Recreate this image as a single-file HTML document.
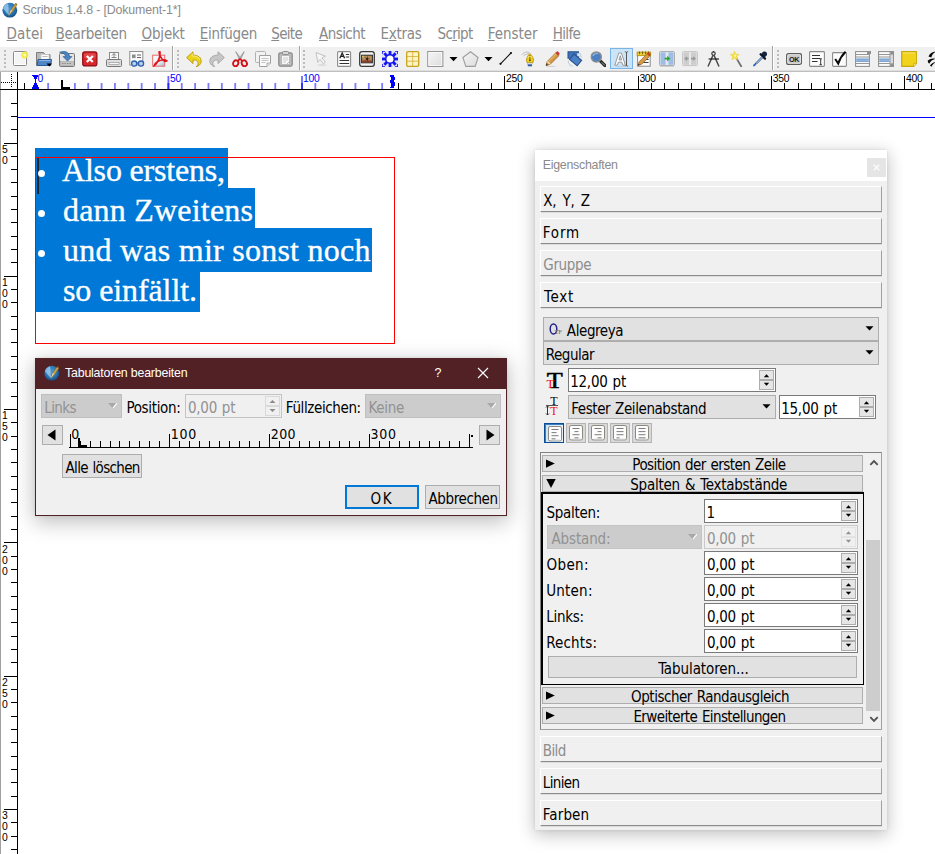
<!DOCTYPE html>
<html lang="de"><head><meta charset="utf-8"><title>Scribus 1.4.8 - [Dokument-1*]</title>
<style>
*{box-sizing:border-box;margin:0;padding:0}
html,body{width:935px;height:854px;overflow:hidden;background:#fff}
body{position:relative;font-family:"DejaVu Sans Condensed","DejaVu Sans","Liberation Sans",sans-serif;font-size:15px;letter-spacing:-0.45px;color:#000;font-stretch:condensed}
.abs,.abs *{position:absolute}
.a{position:absolute}
.t{position:absolute;white-space:nowrap;line-height:1}
.seg{font-family:"Liberation Sans",sans-serif;letter-spacing:0}
/* title + menu */
#title{left:22.5px;top:4.3px;font-size:12.4px;letter-spacing:-0.15px !important;color:#8b8b8b}
.m{position:absolute;top:27px;font-size:15px;color:#898989;white-space:nowrap;line-height:1;letter-spacing:-0.2px}
.m u{text-decoration:underline;text-underline-offset:0.5px;text-decoration-thickness:1px}
#tb{left:0;top:46.5px;width:935px;height:25.5px;background:linear-gradient(#f0f0f0 0,#f0f0f0 22.5px,#d6d6d6 24px,#8e8e8e 25.5px)}
.vsep{position:absolute;top:46px;width:2px;height:24px;border-left:1px solid #a5a5a5;border-right:1px solid #fff}
.grip{position:absolute;top:50px;width:2px;height:18px;background:repeating-linear-gradient(#bcbcbc 0,#bcbcbc 2px,transparent 2px,transparent 4px)}
.rl{font-size:10.4px;letter-spacing:-0.3px;font-family:"Liberation Sans",sans-serif}
.doc{font-family:"Liberation Serif",serif;font-size:32px;color:#fff;letter-spacing:0;line-height:1;-webkit-text-stroke:0.35px #fff}
.ic{position:absolute;top:51px;width:16px;height:16px;overflow:visible}
</style></head><body>
<!-- TITLE -->
<svg class="a" style="left:2px;top:2px" width="17" height="17" viewBox="0 0 17 17"><defs><radialGradient id="sg2" cx="45%" cy="40%" r="62%"><stop offset="0" stop-color="#4a9ad8"/><stop offset=".6" stop-color="#2a78b8"/><stop offset="1" stop-color="#134a80"/></radialGradient></defs><circle cx="7.800" cy="8.200" r="7.400" fill="url(#sg2)"/><path d="M6.200 1.200C3.500 1.700 1.500 3.600 .9 6.200L7 13.400z" fill="#cfe6f7" opacity=".55"/><path d="M6.800 13.600L8.800 8L13 1.900L14.800 3.100L11 9z" fill="#c9a248" stroke="#8a6a1e" stroke-width=".5"/><path d="M6.800 13.600L8.800 8L10 8.800z" fill="#f0dfae"/><path d="M13 1.900l1.800 1.200l.5-.9l-1.500-1.200z" fill="#7a5416"/></svg>
<div class="t seg" id="title">Scribus 1.4.8 - [Dokument-1*]</div>
<!-- MENU -->
<div class="m" style="left:6.53px;letter-spacing:0.137px"><u>D</u>atei</div>
<div class="m" style="left:55.53px;letter-spacing:-0.295px"><u>B</u>earbeiten</div>
<div class="m" style="left:141.60px;letter-spacing:-0.219px"><u>O</u>bjekt</div>
<div class="m" style="left:199.83px;letter-spacing:-0.303px"><u>E</u>infügen</div>
<div class="m" style="left:271.30px;letter-spacing:-0.687px"><u>S</u>eite</div>
<div class="m" style="left:319.00px;letter-spacing:-0.565px"><u>A</u>nsicht</div>
<div class="m" style="left:380.53px;letter-spacing:-0.283px">E<u>x</u>tras</div>
<div class="m" style="left:437.60px;letter-spacing:-0.701px">Sc<u>r</u>ipt</div>
<div class="m" style="left:487.83px;letter-spacing:-0.064px"><u>F</u>enster</div>
<div class="m" style="left:552.83px;letter-spacing:-0.691px"><u>H</u>ilfe</div>
<!-- TOOLBAR -->
<div class="a" id="tb"></div>
<div class="vsep" style="left:172px"></div>
<div class="vsep" style="left:299px"></div>
<div class="vsep" style="left:772px"></div>
<div class="grip" style="left:4px"></div>
<div class="grip" style="left:177px"></div>
<div class="grip" style="left:303px"></div>
<div class="grip" style="left:777px"></div>
<div class="a" style="left:610px;top:48px;width:23px;height:21px;background:#cce4f7;border:1px solid #7ab3e6"></div>
<svg class="a" style="left:13px;top:51px" width="16" height="16" viewBox="0 0 16 16"><rect x=".5" y=".5" width="13" height="14" rx="1" fill="#f4f4f4" stroke="#8a8a8a"/><rect x="1.5" y="1.5" width="11" height="12" fill="none" stroke="#fff"/><circle cx="11.8" cy="4" r="3.6" fill="#f3ea3c" opacity=".9"/><circle cx="11.8" cy="4" r="1.6" fill="#fffbb0"/></svg>
<svg class="a" style="left:36px;top:51px" width="16" height="16" viewBox="0 0 16 16"><path d="M.5 1.5h7l1.5 2h5v11h-13.5z" fill="#b9b9b9" stroke="#7d7d7d"/><rect x="5" y="3.5" width="8" height="6" fill="#fafafa" stroke="#c9c9c9" stroke-width=".6"/><path d="M6.5 5.5h5" stroke="#bbb"/><path d="M2 8.5h13.5l-.8 6h-13.5z" fill="#4f86c6" stroke="#2b5c9a"/><path d="M3 9.5h11.5" stroke="#8fb5e2"/><path d="M10.5 12.5h5.5l-2.75 3z" fill="#000"/></svg>
<svg class="a" style="left:59px;top:51px" width="16" height="16" viewBox="0 0 16 16"><rect x=".5" y="2.500" width="15" height="13" rx="1" fill="#e4e4e4" stroke="#777"/><rect x="1.500" y="10.500" width="13" height="4" fill="#c4c4c4" stroke="#999" stroke-width=".5"/><path d="M3 12.500h10" stroke="#8a8a8a" stroke-dasharray="1.5 1"/><path d="M.6 1.300c4.800-1.900 9.600-.6 9.900 4.300h2.400l-4.400 4.500l-4.400-4.500h2.500c-.1-2.300-2.400-3.800-6-4.300z" fill="#4c84bf" stroke="#2a5f96" stroke-width=".7"/></svg>
<svg class="a" style="left:82px;top:51px" width="16" height="16" viewBox="0 0 16 16"><rect x=".7" y=".9" width="14.2" height="14" rx="2.2" fill="#d8262c" stroke="#8e0f13" stroke-width="1.2"/><rect x="2" y="2.2" width="11.6" height="5" rx="1.5" fill="#e85b5f" opacity=".6"/><path d="M4.8 5l6 6M10.8 5l-6 6" stroke="#fff" stroke-width="2.3"/></svg>
<svg class="a" style="left:106px;top:51px" width="16" height="16" viewBox="0 0 16 16"><rect x="3.5" y="1.5" width="9" height="7" fill="#fbfbfb" stroke="#8a8a8a"/><path d="M8 2.5v4M6 4.5l2-2l2 2M5.5 6.5h5" stroke="#777" stroke-width=".9" fill="none"/><rect x=".5" y="8.5" width="15" height="7" rx="1" fill="#dedede" stroke="#777"/><rect x="3" y="11.5" width="10" height="2" fill="#f7f7f7" stroke="#8a8a8a" stroke-width=".6"/></svg>
<svg class="a" style="left:129px;top:51px" width="16" height="16" viewBox="0 0 16 16"><rect x=".8" y=".5" width="13" height="13.5" fill="#fbfbfb" stroke="#8e8e8e"/><rect x="3" y="3.5" width="3.6" height="3.6" fill="#8d8d8d"/><path d="M8 4h4M8 6.5h4" stroke="#666" stroke-width="1"/><circle cx="5.2" cy="12.6" r="2.6" fill="#b9d0ee" stroke="#2f61ae" stroke-width="1.3"/><circle cx="12" cy="12.6" r="2.6" fill="#b9d0ee" stroke="#2f61ae" stroke-width="1.3"/><path d="M7.6 12h2" stroke="#2f61ae" stroke-width="1.3"/></svg>
<svg class="a" style="left:152px;top:51px" width="16" height="16" viewBox="0 0 16 16"><defs><linearGradient id="pdfg" x1="0" y1="0" x2="1" y2="1"><stop offset="0" stop-color="#fff"/><stop offset=".6" stop-color="#e8eef2"/><stop offset="1" stop-color="#8fb7c9"/></linearGradient></defs><rect x=".7" y="4.2" width="12" height="11" fill="url(#pdfg)" stroke="#ea6a6e" stroke-width="1"/><path d="M7.6 0c-1.3 1.6 .6 5.4 2.6 8.2c1.5 2 3.6 2.3 4.6 1.6c-1.4-1.2-4.2-1.2-7-.2c-2.6 1-5 3-5.6 5.2c2-0.8 5-6.300 5.6-9.800c.3-2 .5-4-.2-5z" fill="none" stroke="#e0151b" stroke-width="1.600"/></svg>
<svg class="a" style="left:186px;top:51px" width="16" height="16" viewBox="0 0 16 16"><path d="M7 .8v3.400c5.200-.3 8.400 2.600 8.200 6.400c-.2 2.600-2.400 4.600-5.200 5.200c2.200-1.600 2.800-3.600 1.600-5.200c-1-1.300-2.600-1.700-4.600-1.600v3.600l-6.400-6z" fill="#edd21c" stroke="#b7990c" stroke-width=".9" stroke-linejoin="round"/><path d="M6.300 2.600v2.400c4.200-.2 6.600 1.400 7.600 3.600" fill="none" stroke="#f8ec86" stroke-width=".9"/></svg>
<svg class="a" style="left:209px;top:51px" width="16" height="16" viewBox="0 0 16 16"><path d="M9 .8v3.400c-5.200-.3-8.400 2.600-8.200 6.400c.2 2.600 2.400 4.600 5.200 5.200c-2.200-1.600-2.800-3.600-1.600-5.200c1-1.300 2.600-1.700 4.600-1.600v3.600l6.400-6z" fill="#c6c6c6" stroke="#a3a3a3" stroke-width=".9" stroke-linejoin="round"/></svg>
<svg class="a" style="left:232px;top:51px" width="16" height="16" viewBox="0 0 16 16"><path d="M3.800 .6l3.800 8.400l1.300-1.400zM12.200 .6l-3.800 8.400l-1.300-1.400z" fill="#c9c9c9" stroke="#8a8a8a" stroke-width=".7"/><ellipse cx="3.700" cy="12.300" rx="2.500" ry="3" transform="rotate(28 3.7 12.3)" fill="none" stroke="#d01318" stroke-width="1.900"/><ellipse cx="12.300" cy="12.300" rx="2.500" ry="3" transform="rotate(-28 12.3 12.3)" fill="none" stroke="#d01318" stroke-width="1.900"/><path d="M5.200 10.200l2.800-2.200l2.800 2.200" stroke="#d01318" stroke-width="1.600" fill="none"/></svg>
<svg class="a" style="left:255px;top:51px" width="16" height="16" viewBox="0 0 16 16"><rect x=".5" y=".5" width="10" height="11" rx="1" fill="#f2f2f2" stroke="#b1b1b1"/><path d="M4.500 4.500h11v7.500l-3.500 3.500h-7.500z" fill="#fafafa" stroke="#9f9f9f"/><path d="M12 15.500v-3.500h3.500" fill="#e4e4e4" stroke="#9f9f9f" stroke-width=".8"/><path d="M6.500 7.500h7M6.500 9.500h7M6.500 11.500h4" stroke="#bdbdbd" stroke-width=".9"/></svg>
<svg class="a" style="left:278px;top:51px" width="16" height="16" viewBox="0 0 16 16"><rect x=".8" y="1.800" width="13.400" height="13.400" rx="1.600" fill="#bdbdbd" stroke="#868686" stroke-width="1.200"/><rect x="4.500" y=".5" width="6" height="3" rx="1" fill="#d6d6d6" stroke="#868686" stroke-width=".9"/><path d="M3.500 4.500h8v9h-5l-3-0z" fill="#f7f7f7" stroke="#a9a9a9" stroke-width=".7"/><path d="M5 7h5M5 9h5M5 11h3" stroke="#c6c6c6" stroke-width=".9"/><path d="M11.500 10.500l-3 3" stroke="#aaa" stroke-width=".8"/></svg>
<svg class="a" style="left:315px;top:51px" width="16" height="16" viewBox="0 0 16 16"><path d="M1 1.500l9.500 3.700l-3.600 1.700l3.600 4.300l-2.100 1.600l-3.400-4.400l-2.200 2.900z" fill="#f6f6f6" stroke="#c2c2c2" stroke-width="1"/><ellipse cx="7" cy="14" rx="4.500" ry="1" fill="#ddd"/></svg>
<svg class="a" style="left:337px;top:51px" width="16" height="16" viewBox="0 0 16 16"><rect x=".6" y=".6" width="13" height="14.800" rx="1" fill="#fdfdfd" stroke="#8d8d8d" stroke-width="1.100"/><path d="M2.800 7.200l2.400-5.200l2.400 5.200M3.700 5.400h3" stroke="#222" stroke-width="1.300" fill="none"/><path d="M8.800 3.500h3.400M8.800 6h3.400M2.500 9.500h9.700M2.500 12.500h9.700" stroke="#333" stroke-width="1.100"/></svg>
<svg class="a" style="left:359px;top:51px" width="16" height="16" viewBox="0 0 16 16"><rect x=".7" y=".7" width="14.600" height="14.600" rx="2.400" fill="#f5f5f5" stroke="#3a3a3a" stroke-width="1.300"/><rect x="2.600" y="4.200" width="10.800" height="7.600" fill="#b68a5a" stroke="#2a2a2a" stroke-width="1"/><rect x="3.200" y="9.400" width="9.600" height="1.800" fill="#8e3b2b"/><path d="M8.600 5l.3 2.400l2 .4l-2 .6l.2 2.200l-1.100-1.800l-1.900 .8l1.300-1.600l-1.300-1.400l1.900 .4z" fill="#2a1a10"/><rect x="3.200" y="4.800" width="1.500" height="1.500" fill="#d8d36a"/></svg>
<svg class="a" style="left:382px;top:51px" width="16" height="16" viewBox="0 0 16 16"><rect x="0" y="0" width="16" height="16" fill="#dfe4fb"/><path d="M0 0h3M0 0v3M16 0h-3M16 0v3M0 16h3M0 16v-3M16 16h-3M16 16v-3" stroke="#1414f0" stroke-width="1.600"/><rect x="6.600" y="0" width="2.800" height="4" y="0.300" transform="rotate(0 8 8)" fill="#1414f0"/><rect x="6.600" y="0" width="2.800" height="4" y="0.300" transform="rotate(45 8 8)" fill="#1414f0"/><rect x="6.600" y="0" width="2.800" height="4" y="0.300" transform="rotate(90 8 8)" fill="#1414f0"/><rect x="6.600" y="0" width="2.800" height="4" y="0.300" transform="rotate(135 8 8)" fill="#1414f0"/><rect x="6.600" y="0" width="2.800" height="4" y="0.300" transform="rotate(180 8 8)" fill="#1414f0"/><rect x="6.600" y="0" width="2.800" height="4" y="0.300" transform="rotate(225 8 8)" fill="#1414f0"/><rect x="6.600" y="0" width="2.800" height="4" y="0.300" transform="rotate(270 8 8)" fill="#1414f0"/><rect x="6.600" y="0" width="2.800" height="4" y="0.300" transform="rotate(315 8 8)" fill="#1414f0"/><circle cx="8" cy="8" r="5" fill="#1414f0"/><circle cx="8" cy="8" r="3.500" fill="#fff"/></svg>
<svg class="a" style="left:406px;top:51px" width="16" height="16" viewBox="0 0 16 16"><rect x=".7" y=".7" width="12" height="14.600" rx="1.200" fill="#fdf4c4" stroke="#c8a21e" stroke-width="1.300"/><path d="M6.700 1v14M1 5.500h11.500M1 10.200h11.500" stroke="#d2ae38" stroke-width=".8"/></svg>
<svg class="a" style="left:427px;top:51px" width="17" height="16" viewBox="0 0 17 16"><defs><linearGradient id="shg" x1="0" y1="0" x2="1" y2="1"><stop offset="0" stop-color="#f6f6f6"/><stop offset="1" stop-color="#dcdcdc"/></linearGradient></defs><rect x=".8" y=".6" width="15" height="14.800" fill="url(#shg)" stroke="#969696" stroke-width="1.200"/><rect x="1.800" y="1.600" width="13" height="12.800" fill="none" stroke="#fff" stroke-width=".8"/></svg>
<svg class="a" style="left:449px;top:57px" width="9" height="5" viewBox="0 0 9 5"><path d="M.5 0h8l-4 4.300z" fill="#000"/></svg>
<svg class="a" style="left:462px;top:51px" width="17" height="16" viewBox="0 0 17 16"><path d="M8.500 .8l7.600 5.700l-2.900 8.900h-9.400l-2.900-8.900z" fill="url(#shg)" stroke="#9d9d9d" stroke-width="1.100"/></svg>
<svg class="a" style="left:484px;top:57px" width="9" height="5" viewBox="0 0 9 5"><path d="M.5 0h8l-4 4.300z" fill="#000"/></svg>
<svg class="a" style="left:498px;top:51px" width="16" height="16" viewBox="0 0 16 16"><path d="M2.500 12.800l10.500-10.800" stroke="#111" stroke-width="1.100"/><circle cx="2.500" cy="12.800" r="1.100" fill="#111"/><circle cx="13" cy="2" r="1.100" fill="#111"/></svg>
<svg class="a" style="left:521px;top:51px" width="16" height="16" viewBox="0 0 16 16"><path d="M.8 3.800c2.200-2.800 5.400-3.600 8-1.600M2.600 4.800c2-1.800 4-2.200 6-1.400" stroke="#b4b4b4" stroke-width=".9" fill="none"/><path d="M8.800 2.600c-2.200 2.400-4.200 5.400-2.600 9.200h5.600c1.600-3.800-.4-6.800-3-9.200z" fill="#f3d21a" stroke="#b48d0a" stroke-width=".9"/><path d="M8.900 4v5" stroke="#6b5205" stroke-width=".9"/><circle cx="8.900" cy="9.300" r=".9" fill="#4a3903"/><path d="M6.500 6.500c1.600-1.600 3.200-1.600 4.800 0" stroke="#fff3a0" stroke-width=".7" fill="none"/><rect x="6.400" y="12" width="5" height="1.300" fill="#e9e9e9" stroke="#999" stroke-width=".4"/><rect x="6.800" y="13.400" width="4.200" height="1.900" fill="#2c5ca8"/></svg>
<svg class="a" style="left:545px;top:51px" width="16" height="16" viewBox="0 0 16 16"><path d="M1 14.600l1.300-4.200l8.600-8.600l2.900 2.900l-8.600 8.600z" fill="#d99a46" stroke="#8a5a1c" stroke-width=".8"/><path d="M3.400 10.300l8.500-8.500" stroke="#f3c98a" stroke-width="1"/><path d="M10.900 1.800l1-1c.8-.6 2.900 1.500 2.300 2.300l-1 1z" fill="#e23a3a" stroke="#a01c1c" stroke-width=".6"/><path d="M1 14.600l.6-2l1.400 1.400z" fill="#333"/><path d="M2.300 10.400l2.900 2.900" stroke="#f0dcb8" stroke-width="1.400"/><ellipse cx="6" cy="15.400" rx="5" ry=".6" fill="#d4d4d4"/></svg>
<svg class="a" style="left:567px;top:51px" width="16" height="16" viewBox="0 0 16 16"><rect x="1" y=".8" width="10.400" height="6.400" fill="#3f72b8" stroke="#244f8c" stroke-width="1"/><rect x="10.200" y="2.200" width="3.200" height="3" fill="#dfe7f3" stroke="#b3c3da" stroke-width=".5"/><rect x="3.600" y="5.400" width="10" height="7" transform="rotate(40 8.600 8.900)" fill="#4a7fc6" stroke="#244f8c" stroke-width="1"/><path d="M1.300 9.800c0 3 1.600 4.600 4 4.800M13.300 4l1.400 2.600" stroke="#b9c9e2" stroke-width="1" fill="none"/><path d="M2 14.800h4" stroke="#d5deed" stroke-width="1.400"/></svg>
<svg class="a" style="left:590px;top:51px" width="16" height="16" viewBox="0 0 16 16"><path d="M10 9.600l5 5" stroke="#2b2b2b" stroke-width="3.200" stroke-linecap="round"/><path d="M12 11.600l2.600 2.600" stroke="#9a9a9a" stroke-width="1" stroke-linecap="round"/><circle cx="6.300" cy="5.900" r="5" fill="#4b80c5" stroke="#8d8d8d" stroke-width="1.500"/><path d="M3 4.800c.8-1.800 2.600-2.600 4.600-2.200" stroke="#9fc0ea" stroke-width="1.100" fill="none"/></svg>
<svg class="a" style="left:614px;top:51px" width="16" height="16" viewBox="0 0 16 16"><path d="M.8 14.200l4-12.200h2.600l4 12.200h-2.600l-.9-3h-3.600l-.9 3zM5 9h2.600l-1.300-4.300z" fill="#fff" stroke="#8e8e8e" stroke-width=".9" fill-rule="evenodd"/><path d="M12.500 1.200v13.600M10.800 .8c1 0 1.700 .2 1.700 .8c0-.6 .7-.8 1.700-.8M10.800 15.200c1 0 1.700-.2 1.700-.8c0 .6 .7 .8 1.700 .8" stroke="#555" stroke-width="1" fill="none"/><ellipse cx="7" cy="15.600" rx="6" ry=".5" fill="#b9cde0"/></svg>
<svg class="a" style="left:636px;top:51px" width="16" height="16" viewBox="0 0 16 16"><rect x="1.600" y="2.600" width="12.600" height="12.600" fill="#fdfdfd" stroke="#8a8a8a"/><rect x="1.100" y="1.100" width="13.600" height="3.600" fill="#f2d43a" stroke="#a98a0b" stroke-width=".8"/><path d="M3.500 .4v2.800M6.500 .4v2.800M9.500 .4v2.800M12.500 .4v2.800" stroke="#7a6407" stroke-width="1.200"/><path d="M6.800 8.500h5.800M6.800 11.500h5.800" stroke="#444" stroke-width="1.100"/><path d="M2 14.400l1.200-3.700l8-8l2.500 2.500l-8 8z" fill="#d99a46" stroke="#8a5a1c" stroke-width=".7"/><path d="M11.200 2.700l.9-.9c.7-.6 2.600 1.300 2 2l-.9 .9z" fill="#e23a3a" stroke="#a01c1c" stroke-width=".5"/><path d="M2 14.400l.5-1.700l1.200 1.200z" fill="#222"/></svg>
<svg class="a" style="left:659px;top:51px" width="16" height="16" viewBox="0 0 16 16"><rect x=".6" y=".6" width="14.800" height="14" rx="1" fill="#e4e9f1" stroke="#a6a6a6" stroke-width="1"/><rect x="1.600" y="1.400" width="5" height="12.400" fill="#9dbde6"/><rect x="9.400" y="1.400" width="5" height="12.400" fill="#9dbde6"/><path d="M5.600 7.600h3.400" stroke="#2fa32f" stroke-width="1.800"/><path d="M8.200 4.800l3.200 2.800l-3.200 2.800z" fill="#2fa32f"/><rect x="1" y="15" width="14" height="1" fill="#d0d0d0"/></svg>
<svg class="a" style="left:682px;top:51px" width="16" height="16" viewBox="0 0 16 16"><rect x=".6" y=".6" width="14.800" height="14" rx="1" fill="#e9e9e9" stroke="#c4c4c4" stroke-width="1"/><rect x="1.600" y="1.400" width="5.400" height="12.400" fill="#cdcdcd"/><rect x="9" y="1.400" width="5.400" height="12.400" fill="#cdcdcd"/><path d="M4.500 7.600h2M9 7.600h2.500" stroke="#9a9a9a" stroke-width="1.600"/><path d="M5 5.200l-3 2.400l3 2.400zM11 5.200l3 2.400l-3 2.400z" fill="#9a9a9a"/></svg>
<svg class="a" style="left:706px;top:51px" width="16" height="16" viewBox="0 0 16 16"><circle cx="7.500" cy="2.600" r="1.700" fill="none" stroke="#3a3a3a" stroke-width="1.200"/><path d="M7 4.200l-5 11.300M8 4.200l5 11.300" stroke="#4a4a4a" stroke-width="1.500" fill="none"/><path d="M2.600 8h10.400" stroke="#111" stroke-width="1.100"/><path d="M7.500 0v1.200" stroke="#333" stroke-width="1"/></svg>
<svg class="a" style="left:729px;top:51px" width="16" height="16" viewBox="0 0 16 16"><path d="M7 6.500l5.300 9" stroke="#6f6f6f" stroke-width="1.700" stroke-linecap="round"/><path d="M5.500 .3l1.500 2.800l3.100 .3l-2.200 2.200l.7 3.100l-2.900-1.500l-2.800 1.600l.6-3.200l-2.300-2.100l3.100-.4z" fill="#f5df3a" stroke="#e9cf50" stroke-width=".5"/><path d="M5.500 2.200l.7 1.600l1.600 .2l-1.200 1l.3 1.600l-1.400-.8z" fill="#fffbd0"/></svg>
<svg class="a" style="left:752px;top:51px" width="16" height="16" viewBox="0 0 16 16"><path d="M9.800 2.200c1.200-2 3.400-2.300 4.600-1c1.200 1.300 .8 3.400-1.200 4.600l-1.400 .8l-2.800-2.800z" fill="#15243e"/><path d="M8.600 3.200l4.400 4.400" stroke="#0c1626" stroke-width="2.200" stroke-linecap="round"/><path d="M9.800 5.800l-6.200 6.200l-.4 1.400l1.400-.4l6.200-6.200z" fill="#c9dcf4" stroke="#2c4f86" stroke-width=".9"/><path d="M2.600 12.600c-1.300 1-1.800 2-1.300 2.600c.6 .6 1.700 .1 2.600-1.200z" fill="#2f66c2"/></svg>
<svg class="a" style="left:786px;top:51px" width="16" height="16" viewBox="0 0 16 16"><rect x=".6" y="2.600" width="15" height="10.800" rx="2" fill="#c9c9c9" stroke="#5c5c5c" stroke-width="1.100"/><rect x="1.700" y="3.700" width="12.800" height="8.600" rx="1.300" fill="none" stroke="#e9e9e9" stroke-width=".8"/><text x="8.100" y="10.800" font-family="Liberation Sans,sans-serif" font-weight="bold" font-size="7.200" text-anchor="middle" fill="#1a1a1a" letter-spacing="-.3">OK</text></svg>
<svg class="a" style="left:809px;top:51px" width="16" height="16" viewBox="0 0 16 16"><rect x=".6" y=".6" width="14.800" height="14.800" rx=".8" fill="#fdfdfd" stroke="#8a8a8a" stroke-width="1.100"/><path d="M3 4.500h8M3 7.500h8M3 10.500h5.500" stroke="#333" stroke-width="1.100"/><path d="M11.700 8v5.500M10.500 7.800h2.400M10.500 13.700h2.400" stroke="#222" stroke-width=".9"/></svg>
<svg class="a" style="left:832px;top:51px" width="16" height="16" viewBox="0 0 16 16"><rect x=".6" y="1.600" width="13.800" height="13.800" rx=".8" fill="#fdfdfd" stroke="#8a8a8a" stroke-width="1.100"/><path d="M3.200 8l3 4.600c1.600-4.600 4-8.600 7.400-11.800" stroke="#0a0a0a" stroke-width="2" fill="none"/></svg>
<svg class="a" style="left:855px;top:51px" width="16" height="16" viewBox="0 0 16 16"><rect x=".6" y=".6" width="13.800" height="14.800" fill="#fafafa" stroke="#8a8a8a" stroke-width="1"/><rect x="12" y="0" width="4" height="3" fill="#8f8f8f"/><path d="M1 3.500h13M1 6h13M1 12.500h13" stroke="#8a8a8a" stroke-width=".9"/><rect x="1.200" y="7.500" width="12.600" height="3.400" fill="#6f9bd1"/><path d="M1 9.200h13" stroke="#b7cdea" stroke-width=".8"/></svg>
<svg class="a" style="left:878px;top:51px" width="16" height="16" viewBox="0 0 16 16"><rect x=".6" y=".6" width="14.800" height="14.800" fill="#fafafa" stroke="#8a8a8a" stroke-width="1"/><rect x="12" y=".6" width="3.400" height="14.800" fill="#d9d9d9" stroke="#8a8a8a" stroke-width=".8"/><rect x="12.400" y="1" width="2.600" height="2.600" fill="#8f8f8f"/><rect x="12.400" y="12.400" width="2.600" height="2.600" fill="#8f8f8f"/><path d="M1 3.500h11M1 6h11M1 12.500h11" stroke="#8a8a8a" stroke-width=".9"/><rect x="1.200" y="7.500" width="10.600" height="3.400" fill="#6f9bd1"/><path d="M1 9.200h11" stroke="#b7cdea" stroke-width=".8"/></svg>
<svg class="a" style="left:901px;top:51px" width="16" height="16" viewBox="0 0 16 16"><path d="M.7 .7h15v11.600l-3 3h-12z" fill="#f2d31c" stroke="#c7a70a" stroke-width="1.200"/><path d="M15.700 12.300h-3v3" fill="#fbef9a" stroke="#c7a70a" stroke-width=".8"/><path d="M2 2h12" stroke="#f9e873" stroke-width="1"/></svg>
<svg class="a" style="left:927px;top:51px" width="8" height="16" viewBox="0 0 8 16"><path d="M1.500 5.500c1-3 4-5 8-5.200c-3 1.600-4.600 3.400-5.200 6.200zM.8 9.500c2.500-2 5.500-2.600 8-1.600c-3 .6-5 2-6.600 4.800c-1-.6-1.500-1.800-1.400-3.200zM3 14.500c1.600-2.400 4-3.600 6-3.200c-2.400 1-3.600 2.400-4.400 4.400z" fill="#0a0a0a"/></svg>
<!-- RULERS -->
<svg class="a" style="left:0;top:72px" width="935" height="782" viewBox="0 72 935 782" shape-rendering="crispEdges">
<rect x="0" y="72" width="935" height="18" fill="#fff"/>
<rect x="0" y="72" width="1" height="782" fill="#a0a0a0"/>
<rect x="47.25" y="83" width="1.8" height="6" fill="#7a7aff" shape-rendering="auto"/>
<rect x="73.97" y="83" width="1.8" height="6" fill="#7a7aff" shape-rendering="auto"/>
<rect x="87.33" y="83" width="1.8" height="6" fill="#7a7aff" shape-rendering="auto"/>
<rect x="100.69" y="83" width="1.8" height="6" fill="#7a7aff" shape-rendering="auto"/>
<rect x="114.05" y="83" width="1.8" height="6" fill="#7a7aff" shape-rendering="auto"/>
<rect x="127.41" y="83" width="1.8" height="6" fill="#7a7aff" shape-rendering="auto"/>
<rect x="140.77" y="83" width="1.8" height="6" fill="#7a7aff" shape-rendering="auto"/>
<rect x="154.13" y="83" width="1.8" height="6" fill="#7a7aff" shape-rendering="auto"/>
<rect x="167.49" y="76" width="1.8" height="13" fill="#6868ff" shape-rendering="auto"/>
<rect x="167.49" y="83" width="1.8" height="6" fill="#2a2aff" shape-rendering="auto"/>
<rect x="180.85" y="83" width="1.8" height="6" fill="#7a7aff" shape-rendering="auto"/>
<rect x="194.21" y="83" width="1.8" height="6" fill="#7a7aff" shape-rendering="auto"/>
<rect x="207.57" y="83" width="1.8" height="6" fill="#7a7aff" shape-rendering="auto"/>
<rect x="220.93" y="83" width="1.8" height="6" fill="#7a7aff" shape-rendering="auto"/>
<rect x="234.29" y="83" width="1.8" height="6" fill="#7a7aff" shape-rendering="auto"/>
<rect x="247.65" y="83" width="1.8" height="6" fill="#7a7aff" shape-rendering="auto"/>
<rect x="261.01" y="83" width="1.8" height="6" fill="#7a7aff" shape-rendering="auto"/>
<rect x="274.37" y="83" width="1.8" height="6" fill="#7a7aff" shape-rendering="auto"/>
<rect x="287.73" y="83" width="1.8" height="6" fill="#7a7aff" shape-rendering="auto"/>
<rect x="301.09" y="76" width="1.8" height="13" fill="#6868ff" shape-rendering="auto"/>
<rect x="301.09" y="83" width="1.8" height="6" fill="#2a2aff" shape-rendering="auto"/>
<rect x="314.45" y="83" width="1.8" height="6" fill="#7a7aff" shape-rendering="auto"/>
<rect x="327.81" y="83" width="1.8" height="6" fill="#7a7aff" shape-rendering="auto"/>
<rect x="341.17" y="83" width="1.8" height="6" fill="#7a7aff" shape-rendering="auto"/>
<rect x="354.53" y="83" width="1.8" height="6" fill="#7a7aff" shape-rendering="auto"/>
<rect x="367.89" y="83" width="1.8" height="6" fill="#7a7aff" shape-rendering="auto"/>
<rect x="381.25" y="83" width="1.8" height="6" fill="#7a7aff" shape-rendering="auto"/>
<rect x="398" y="83" width="1" height="6" fill="#000"/>
<rect x="411" y="83" width="1" height="6" fill="#000"/>
<rect x="424" y="83" width="1" height="6" fill="#000"/>
<rect x="438" y="83" width="1" height="6" fill="#000"/>
<rect x="451" y="83" width="1" height="6" fill="#000"/>
<rect x="464" y="83" width="1" height="6" fill="#000"/>
<rect x="478" y="83" width="1" height="6" fill="#000"/>
<rect x="491" y="83" width="1" height="6" fill="#000"/>
<rect x="504" y="76" width="1" height="13" fill="#000"/>
<rect x="518" y="83" width="1" height="6" fill="#000"/>
<rect x="531" y="83" width="1" height="6" fill="#000"/>
<rect x="544" y="83" width="1" height="6" fill="#000"/>
<rect x="558" y="83" width="1" height="6" fill="#000"/>
<rect x="571" y="83" width="1" height="6" fill="#000"/>
<rect x="584" y="83" width="1" height="6" fill="#000"/>
<rect x="598" y="83" width="1" height="6" fill="#000"/>
<rect x="611" y="83" width="1" height="6" fill="#000"/>
<rect x="624" y="83" width="1" height="6" fill="#000"/>
<rect x="638" y="76" width="1" height="13" fill="#000"/>
<rect x="651" y="83" width="1" height="6" fill="#000"/>
<rect x="664" y="83" width="1" height="6" fill="#000"/>
<rect x="678" y="83" width="1" height="6" fill="#000"/>
<rect x="691" y="83" width="1" height="6" fill="#000"/>
<rect x="704" y="83" width="1" height="6" fill="#000"/>
<rect x="718" y="83" width="1" height="6" fill="#000"/>
<rect x="731" y="83" width="1" height="6" fill="#000"/>
<rect x="744" y="83" width="1" height="6" fill="#000"/>
<rect x="758" y="83" width="1" height="6" fill="#000"/>
<rect x="771" y="76" width="1" height="13" fill="#000"/>
<rect x="784" y="83" width="1" height="6" fill="#000"/>
<rect x="798" y="83" width="1" height="6" fill="#000"/>
<rect x="811" y="83" width="1" height="6" fill="#000"/>
<rect x="824" y="83" width="1" height="6" fill="#000"/>
<rect x="838" y="83" width="1" height="6" fill="#000"/>
<rect x="851" y="83" width="1" height="6" fill="#000"/>
<rect x="864" y="83" width="1" height="6" fill="#000"/>
<rect x="878" y="83" width="1" height="6" fill="#000"/>
<rect x="891" y="83" width="1" height="6" fill="#000"/>
<rect x="904" y="76" width="1" height="13" fill="#000"/>
<rect x="918" y="83" width="1" height="6" fill="#000"/>
<rect x="931" y="83" width="1" height="6" fill="#000"/>
<rect x="0" y="89" width="935" height="1" fill="#000"/>
<rect x="17" y="72" width="1" height="782" fill="#000"/>
<rect x="1" y="82" width="1" height="1" fill="#000"/>
<rect x="3" y="82" width="1" height="1" fill="#000"/>
<rect x="5" y="82" width="1" height="1" fill="#000"/>
<rect x="7" y="82" width="1" height="1" fill="#000"/>
<rect x="9" y="82" width="1" height="1" fill="#000"/>
<rect x="11" y="82" width="1" height="1" fill="#000"/>
<rect x="13" y="82" width="1" height="1" fill="#000"/>
<rect x="15" y="82" width="1" height="1" fill="#000"/>
<rect x="11" y="74" width="1" height="1" fill="#000"/>
<rect x="11" y="76" width="1" height="1" fill="#000"/>
<rect x="11" y="78" width="1" height="1" fill="#000"/>
<rect x="11" y="80" width="1" height="1" fill="#000"/>
<rect x="11" y="82" width="1" height="1" fill="#000"/>
<rect x="11" y="84" width="1" height="1" fill="#000"/>
<rect x="11" y="86" width="1" height="1" fill="#000"/>
<rect x="11" y="103" width="6" height="1" fill="#000"/>
<rect x="11" y="116" width="6" height="1" fill="#000"/>
<rect x="11" y="129" width="6" height="1" fill="#000"/>
<rect x="4" y="143" width="13" height="1" fill="#000"/>
<rect x="11" y="156" width="6" height="1" fill="#000"/>
<rect x="11" y="169" width="6" height="1" fill="#000"/>
<rect x="11" y="182" width="6" height="1" fill="#000"/>
<rect x="11" y="196" width="6" height="1" fill="#000"/>
<rect x="11" y="209" width="6" height="1" fill="#000"/>
<rect x="11" y="222" width="6" height="1" fill="#000"/>
<rect x="11" y="236" width="6" height="1" fill="#000"/>
<rect x="11" y="249" width="6" height="1" fill="#000"/>
<rect x="11" y="262" width="6" height="1" fill="#000"/>
<rect x="4" y="276" width="13" height="1" fill="#000"/>
<rect x="11" y="289" width="6" height="1" fill="#000"/>
<rect x="11" y="302" width="6" height="1" fill="#000"/>
<rect x="11" y="316" width="6" height="1" fill="#000"/>
<rect x="11" y="329" width="6" height="1" fill="#000"/>
<rect x="11" y="342" width="6" height="1" fill="#000"/>
<rect x="11" y="356" width="6" height="1" fill="#000"/>
<rect x="11" y="369" width="6" height="1" fill="#000"/>
<rect x="11" y="382" width="6" height="1" fill="#000"/>
<rect x="11" y="396" width="6" height="1" fill="#000"/>
<rect x="4" y="409" width="13" height="1" fill="#000"/>
<rect x="11" y="422" width="6" height="1" fill="#000"/>
<rect x="11" y="436" width="6" height="1" fill="#000"/>
<rect x="11" y="449" width="6" height="1" fill="#000"/>
<rect x="11" y="462" width="6" height="1" fill="#000"/>
<rect x="11" y="476" width="6" height="1" fill="#000"/>
<rect x="11" y="489" width="6" height="1" fill="#000"/>
<rect x="11" y="502" width="6" height="1" fill="#000"/>
<rect x="11" y="516" width="6" height="1" fill="#000"/>
<rect x="11" y="529" width="6" height="1" fill="#000"/>
<rect x="4" y="542" width="13" height="1" fill="#000"/>
<rect x="11" y="556" width="6" height="1" fill="#000"/>
<rect x="11" y="569" width="6" height="1" fill="#000"/>
<rect x="11" y="582" width="6" height="1" fill="#000"/>
<rect x="11" y="596" width="6" height="1" fill="#000"/>
<rect x="11" y="609" width="6" height="1" fill="#000"/>
<rect x="11" y="622" width="6" height="1" fill="#000"/>
<rect x="11" y="636" width="6" height="1" fill="#000"/>
<rect x="11" y="649" width="6" height="1" fill="#000"/>
<rect x="11" y="662" width="6" height="1" fill="#000"/>
<rect x="4" y="676" width="13" height="1" fill="#000"/>
<rect x="11" y="689" width="6" height="1" fill="#000"/>
<rect x="11" y="702" width="6" height="1" fill="#000"/>
<rect x="11" y="716" width="6" height="1" fill="#000"/>
<rect x="11" y="729" width="6" height="1" fill="#000"/>
<rect x="11" y="742" width="6" height="1" fill="#000"/>
<rect x="11" y="756" width="6" height="1" fill="#000"/>
<rect x="11" y="769" width="6" height="1" fill="#000"/>
<rect x="11" y="782" width="6" height="1" fill="#000"/>
<rect x="11" y="796" width="6" height="1" fill="#000"/>
<rect x="4" y="809" width="13" height="1" fill="#000"/>
<rect x="11" y="822" width="6" height="1" fill="#000"/>
<rect x="11" y="836" width="6" height="1" fill="#000"/>
<rect x="11" y="849" width="6" height="1" fill="#000"/>
<rect x="61" y="80" width="2" height="9" fill="#000"/><rect x="61" y="87" width="9" height="2" fill="#000"/>
<rect x="24" y="83" width="1" height="6" fill="#000"/>
<path d="M32 75h6v2h-1v2h-1v4h1v2h1v2h1v2h-7v-2h1v-2h1v-2h1v-4h-1v-2h-1z" fill="#0000ff"/>
<path d="M390 75h4v2h1v3h-1v2h1v4h-1v2h-4v-1h1v-4h-1v-3h1v-3h-1z" fill="#0000ff"/>
</svg>
<div class="t rl" style="left:37.6px;top:73.9px;color:#0000ff">0</div>
<div class="t rl" style="left:170px;top:73.9px;color:#0000ff">50</div>
<div class="t rl" style="left:303px;top:73.9px;color:#0000ff">100</div>
<div class="t rl" style="left:506px;top:73.9px;color:#000">250</div>
<div class="t rl" style="left:639.4px;top:73.9px;color:#000">300</div>
<div class="t rl" style="left:772.8px;top:73.9px;color:#000">350</div>
<div class="t rl" style="left:906px;top:73.9px;color:#000">400</div>
<div class="t rl" style="left:2px;top:144.7px;color:#000">5</div>
<div class="t rl" style="left:2px;top:155.7px;color:#000">0</div>
<div class="t rl" style="left:2px;top:278.0px;color:#000">1</div>
<div class="t rl" style="left:2px;top:289.0px;color:#000">0</div>
<div class="t rl" style="left:2px;top:300.0px;color:#000">0</div>
<div class="t rl" style="left:2px;top:411.4px;color:#000">1</div>
<div class="t rl" style="left:2px;top:422.4px;color:#000">5</div>
<div class="t rl" style="left:2px;top:433.4px;color:#000">0</div>
<div class="t rl" style="left:2px;top:544.7px;color:#000">2</div>
<div class="t rl" style="left:2px;top:555.7px;color:#000">0</div>
<div class="t rl" style="left:2px;top:566.7px;color:#000">0</div>
<div class="t rl" style="left:2px;top:678.0px;color:#000">2</div>
<div class="t rl" style="left:2px;top:689.0px;color:#000">5</div>
<div class="t rl" style="left:2px;top:700.0px;color:#000">0</div>
<div class="t rl" style="left:2px;top:811.4px;color:#000">3</div>
<div class="t rl" style="left:2px;top:822.4px;color:#000">0</div>
<div class="t rl" style="left:2px;top:833.4px;color:#000">0</div>
<!-- CANVAS -->
<div class="a" style="left:18px;top:117px;width:917px;height:1px;background:#0000ff"></div>
<div class="a" style="left:35.3px;top:148px;width:192.9px;height:39.6px;background:#0078d7"></div>
<div class="a" style="left:35.3px;top:187.6px;width:219.5px;height:40px;background:#0078d7"></div>
<div class="a" style="left:35.3px;top:227.6px;width:337.2px;height:44.8px;background:#0078d7"></div>
<div class="a" style="left:35.3px;top:272px;width:164.7px;height:40.4px;background:#0078d7"></div>
<div class="a" style="left:35px;top:157px;width:360px;height:187px;border:1px solid #f00"></div>
<div class="a" style="left:37px;top:158px;width:2px;height:36px;background:#1c2733"></div>
<div class="a" style="left:38.3px;top:170.3px;width:7px;height:7px;border-radius:50%;background:#fff"></div>
<div class="t doc" id="dl0" style="left:62px;top:154px;letter-spacing:-0.19px">Also erstens,</div>
<div class="a" style="left:38.3px;top:210.3px;width:7px;height:7px;border-radius:50%;background:#fff"></div>
<div class="t doc" id="dl1" style="left:63px;top:194px;letter-spacing:0.21px">dann Zweitens</div>
<div class="a" style="left:38.3px;top:250.3px;width:7px;height:7px;border-radius:50%;background:#fff"></div>
<div class="t doc" id="dl2" style="left:63px;top:234px;letter-spacing:0.25px">und was mir sonst noch</div>
<div class="t doc" id="dl3" style="left:63px;top:274px;letter-spacing:-0.1px">so einfällt.</div>
<!-- DIALOG -->
<div class="a" style="left:35px;top:358px;width:472px;height:158px;background:#f0f0f0;border:1px solid #522126;box-shadow:0 5px 20px 1px rgba(0,0,0,.26),0 0 3px rgba(0,0,0,.10)"></div>
<div class="a" style="left:35px;top:358px;width:472px;height:31px;background:#522126"></div>
<svg class="a" style="left:44px;top:365px" width="17" height="17" viewBox="0 0 17 17"><defs><radialGradient id="sg44" cx="45%" cy="40%" r="62%"><stop offset="0" stop-color="#4a9ad8"/><stop offset=".6" stop-color="#2a78b8"/><stop offset="1" stop-color="#134a80"/></radialGradient></defs><circle cx="7.800" cy="8.200" r="7.400" fill="url(#sg44)"/><path d="M6.200 1.200C3.500 1.700 1.500 3.600 .9 6.200L7 13.400z" fill="#cfe6f7" opacity=".55"/><path d="M6.800 13.600L8.800 8L13 1.900L14.800 3.100L11 9z" fill="#c9a248" stroke="#8a6a1e" stroke-width=".5"/><path d="M6.800 13.600L8.800 8L10 8.800z" fill="#f0dfae"/><path d="M13 1.900l1.800 1.200l.5-.9l-1.500-1.200z" fill="#7a5416"/></svg>
<div class="t seg" style="left:65px;top:367.1px;font-size:12.4px;letter-spacing:-0.2px;color:#fff">Tabulatoren bearbeiten</div>
<div class="t seg" style="left:434.5px;top:366.5px;font-size:12.5px;color:#fff">?</div>
<svg class="a" style="left:477px;top:367px" width="12" height="12" viewBox="0 0 12 12"><path d="M1 1l10 10M11 1L1 11" stroke="#fff" stroke-width="1.1" fill="none"/></svg>
<div class="a" style="left:41px;top:394px;width:81px;height:24px;background:#ccc;border:1px solid #bfbfbf"></div>
<div class="t" style="left:44.33px;top:401.0px;font-size:15px;letter-spacing:-0.612px;word-spacing:0.0px;color:#929292;">Links</div>
<svg class="a" style="left:108px;top:403px" width="9" height="6" viewBox="0 0 9 6"><path d="M0 0h9l-4.5 5z" fill="#a8a8a8"/><path d="M9 0l-4 5" stroke="#fff" stroke-width="1.2"/></svg>
<div class="t" style="left:126.43px;top:401.0px;font-size:15px;letter-spacing:-0.334px;word-spacing:0.0px;color:#000;">Position:</div>
<div class="a" style="left:185px;top:394px;width:97px;height:24px;background:#f0f0f0;border:1px solid #c4c4c4"></div>
<div class="t" style="left:188.00px;top:401.0px;font-size:15px;letter-spacing:-0.257px;word-spacing:0.8px;color:#929292;">0,00 pt</div>
<div class="a" style="left:265px;top:396px;width:15px;height:10px;border:1px solid #d9d9d9"></div><div class="a" style="left:265px;top:406px;width:15px;height:10px;border:1px solid #d9d9d9"></div>
<svg class="a" style="left:269px;top:399px" width="7" height="14" viewBox="0 0 7 14"><path d="M0.5 4L3.5 1l3 3zM0.5 10l3 3l3-3z" fill="#8a8a8a"/></svg>
<div class="t" style="left:285.83px;top:401.0px;font-size:15px;letter-spacing:-0.380px;word-spacing:0.0px;color:#000;">Füllzeichen:</div>
<div class="a" style="left:365px;top:394px;width:136px;height:24px;background:#ccc;border:1px solid #bfbfbf"></div>
<div class="t" style="left:368.53px;top:401.0px;font-size:15px;letter-spacing:-0.298px;word-spacing:0.0px;color:#929292;">Keine</div>
<svg class="a" style="left:487px;top:403px" width="9" height="6" viewBox="0 0 9 6"><path d="M0 0h9l-4.5 5z" fill="#a8a8a8"/><path d="M9 0l-4 5" stroke="#fff" stroke-width="1.2"/></svg>
<div class="a" style="left:42px;top:425px;width:21px;height:20px;background:#e1e1e1;border:1px solid #adadad"></div>
<svg class="a" style="left:42px;top:425px" width="21" height="20" viewBox="0 0 21 20"><path d="M13.5 4.5v11l-8-5.5z" fill="#000"/></svg>
<div class="a" style="left:479px;top:425px;width:21px;height:20px;background:#e1e1e1;border:1px solid #adadad"></div>
<svg class="a" style="left:479px;top:425px" width="21" height="20" viewBox="0 0 21 20"><path d="M7.5 4.5v11l8-5.5z" fill="#000"/></svg>
<svg class="a" style="left:60px;top:425px" width="420" height="26" viewBox="60 425 420 26" shape-rendering="crispEdges"><rect x="69" y="447" width="404" height="1" fill="#000"/><rect x="70" y="434" width="1" height="13" fill="#000"/><rect x="80" y="441" width="1" height="6" fill="#000"/><rect x="90" y="441" width="1" height="6" fill="#000"/><rect x="100" y="441" width="1" height="6" fill="#000"/><rect x="110" y="441" width="1" height="6" fill="#000"/><rect x="119" y="441" width="1" height="6" fill="#000"/><rect x="129" y="441" width="1" height="6" fill="#000"/><rect x="139" y="441" width="1" height="6" fill="#000"/><rect x="149" y="441" width="1" height="6" fill="#000"/><rect x="159" y="441" width="1" height="6" fill="#000"/><rect x="169" y="434" width="1" height="13" fill="#000"/><rect x="179" y="441" width="1" height="6" fill="#000"/><rect x="189" y="441" width="1" height="6" fill="#000"/><rect x="199" y="441" width="1" height="6" fill="#000"/><rect x="209" y="441" width="1" height="6" fill="#000"/><rect x="219" y="441" width="1" height="6" fill="#000"/><rect x="229" y="441" width="1" height="6" fill="#000"/><rect x="239" y="441" width="1" height="6" fill="#000"/><rect x="249" y="441" width="1" height="6" fill="#000"/><rect x="259" y="441" width="1" height="6" fill="#000"/><rect x="269" y="434" width="1" height="13" fill="#000"/><rect x="279" y="441" width="1" height="6" fill="#000"/><rect x="289" y="441" width="1" height="6" fill="#000"/><rect x="299" y="441" width="1" height="6" fill="#000"/><rect x="309" y="441" width="1" height="6" fill="#000"/><rect x="319" y="441" width="1" height="6" fill="#000"/><rect x="329" y="441" width="1" height="6" fill="#000"/><rect x="339" y="441" width="1" height="6" fill="#000"/><rect x="349" y="441" width="1" height="6" fill="#000"/><rect x="359" y="441" width="1" height="6" fill="#000"/><rect x="369" y="434" width="1" height="13" fill="#000"/><rect x="379" y="441" width="1" height="6" fill="#000"/><rect x="389" y="441" width="1" height="6" fill="#000"/><rect x="399" y="441" width="1" height="6" fill="#000"/><rect x="409" y="441" width="1" height="6" fill="#000"/><rect x="419" y="441" width="1" height="6" fill="#000"/><rect x="429" y="441" width="1" height="6" fill="#000"/><rect x="439" y="441" width="1" height="6" fill="#000"/><rect x="449" y="441" width="1" height="6" fill="#000"/><rect x="459" y="441" width="1" height="6" fill="#000"/><rect x="469" y="434" width="1" height="13" fill="#000"/><rect x="78" y="438" width="2" height="9" fill="#000"/><rect x="78" y="445" width="9" height="2" fill="#000"/><rect x="471" y="435" width="2" height="2" fill="#000"/></svg>
<div class="t" style="left:71.34px;top:427.0px;font-size:14px;letter-spacing:0.000px;word-spacing:0.0px;color:#000;">0</div>
<div class="t" style="left:170.69px;top:427.0px;font-size:14px;letter-spacing:0.713px;word-spacing:0.0px;color:#000;">100</div>
<div class="t" style="left:270.82px;top:427.0px;font-size:14px;letter-spacing:0.394px;word-spacing:0.0px;color:#000;">200</div>
<div class="t" style="left:370.62px;top:427.0px;font-size:14px;letter-spacing:0.644px;word-spacing:0.0px;color:#000;">300</div>
<div class="a" style="left:62px;top:454px;width:80px;height:24px;background:#e1e1e1;border:1px solid #adadad"></div>
<div class="t" style="left:65.50px;top:461.0px;font-size:15px;letter-spacing:-0.669px;word-spacing:1px;color:#000;">Alle löschen</div>
<div class="a" style="left:345px;top:485px;width:74px;height:24px;background:#e1e1e1;border:2px solid #0078d7"></div>
<div class="t" style="left:370.60px;top:492.0px;font-size:15px;letter-spacing:1.516px;word-spacing:0.0px;color:#000;">OK</div>
<div class="a" style="left:425px;top:485px;width:75px;height:24px;background:#e1e1e1;border:1px solid #adadad"></div>
<div class="t" style="left:428.50px;top:492.0px;font-size:15px;letter-spacing:-0.402px;word-spacing:0.0px;color:#000;">Abbrechen</div>
<!-- PANEL -->
<div class="a" style="left:535px;top:150px;width:352px;height:680px;background:#f0f0f0;box-shadow:0 4px 16px 1px rgba(0,0,0,.24),0 0 3px rgba(0,0,0,.10)"></div>
<div class="a" style="left:535px;top:150px;width:352px;height:31px;background:#fff"></div>
<div class="t seg" style="left:542.8px;top:159.3px;font-size:12.4px;letter-spacing:-0.28px;color:#8a8a8a">Eigenschaften</div>
<div class="a" style="left:867px;top:158px;width:19px;height:19px;background:#e5e5e5"></div>
<svg class="a" style="left:873px;top:164px" width="7" height="7" viewBox="0 0 7 7"><path d="M.7 .7l5.6 5.6M6.3 .7L.7 6.3" stroke="#fff" stroke-width="1.2"/></svg>
<div class="a" style="left:540px;top:186px;width:342px;height:26px;background:#f0f0f0;border-top:1px solid #fff;border-left:1px solid #fff;border-right:1px solid #a0a0a0;border-bottom:1px solid #8c8c8c"></div>
<div class="a" style="left:541px;top:212px;width:341px;height:1px;background:#dcdcdc"></div>
<div class="t" style="left:543.27px;top:194.0px;font-size:15px;letter-spacing:-0.204px;word-spacing:2px;color:#000;">X, Y, Z</div>
<div class="a" style="left:540px;top:218px;width:342px;height:26px;background:#f0f0f0;border-top:1px solid #fff;border-left:1px solid #fff;border-right:1px solid #a0a0a0;border-bottom:1px solid #8c8c8c"></div>
<div class="a" style="left:541px;top:244px;width:341px;height:1px;background:#dcdcdc"></div>
<div class="t" style="left:542.83px;top:226.0px;font-size:15px;letter-spacing:0.808px;word-spacing:0px;color:#000;">Form</div>
<div class="a" style="left:540px;top:250px;width:342px;height:26px;background:#f0f0f0;border-top:1px solid #fff;border-left:1px solid #fff;border-right:1px solid #a0a0a0;border-bottom:1px solid #8c8c8c"></div>
<div class="a" style="left:541px;top:276px;width:341px;height:1px;background:#dcdcdc"></div>
<div class="t" style="left:543.30px;top:258.0px;font-size:15px;letter-spacing:-0.350px;word-spacing:0px;color:#8c8c8c;">Gruppe</div>
<div class="a" style="left:540px;top:282px;width:342px;height:26px;background:#f0f0f0;border-top:1px solid #fff;border-left:1px solid #fff;border-right:1px solid #a0a0a0;border-bottom:1px solid #8c8c8c"></div>
<div class="a" style="left:541px;top:308px;width:341px;height:1px;background:#dcdcdc"></div>
<div class="t" style="left:544.00px;top:290.0px;font-size:15px;letter-spacing:0.771px;word-spacing:0px;color:#000;">Text</div>
<div class="a" style="left:540px;top:736px;width:342px;height:26px;background:#f0f0f0;border-top:1px solid #fff;border-left:1px solid #fff;border-right:1px solid #a0a0a0;border-bottom:1px solid #8c8c8c"></div>
<div class="a" style="left:541px;top:762px;width:341px;height:1px;background:#dcdcdc"></div>
<div class="t" style="left:542.83px;top:744.0px;font-size:15px;letter-spacing:-0.634px;word-spacing:0px;color:#8c8c8c;">Bild</div>
<div class="a" style="left:540px;top:768px;width:342px;height:26px;background:#f0f0f0;border-top:1px solid #fff;border-left:1px solid #fff;border-right:1px solid #a0a0a0;border-bottom:1px solid #8c8c8c"></div>
<div class="a" style="left:541px;top:794px;width:341px;height:1px;background:#dcdcdc"></div>
<div class="t" style="left:542.83px;top:776.0px;font-size:15px;letter-spacing:-0.641px;word-spacing:0px;color:#000;">Linien</div>
<div class="a" style="left:540px;top:800px;width:342px;height:26px;background:#f0f0f0;border-top:1px solid #fff;border-left:1px solid #fff;border-right:1px solid #a0a0a0;border-bottom:1px solid #8c8c8c"></div>
<div class="a" style="left:541px;top:826px;width:341px;height:1px;background:#dcdcdc"></div>
<div class="t" style="left:542.83px;top:808.0px;font-size:15px;letter-spacing:0.128px;word-spacing:0px;color:#000;">Farben</div>
<div class="a" style="left:543px;top:317px;width:336px;height:24px;background:#e1e1e1;border:1px solid #adadad"></div>
<div class="t" style="left:566.80px;top:324.0px;font-size:15px;letter-spacing:-0.399px;word-spacing:1px;color:#000;">Alegreya</div>
<svg class="a" style="left:865px;top:326px" width="9" height="5" viewBox="0 0 9 5"><path d="M.5 .3h8l-4 4.200z" fill="#000"/></svg>
<svg class="a" style="left:548px;top:321px" width="18" height="16" viewBox="0 0 18 16"><ellipse cx="5.500" cy="8" rx="3.300" ry="5" fill="none" stroke="#23238e" stroke-width="1.500"/><text x="6.600" y="13.400" font-family="Liberation Serif,serif" font-size="7" letter-spacing="-.6" fill="#6e6e6e">TF</text></svg>
<div class="a" style="left:543px;top:341px;width:336px;height:24px;background:#e1e1e1;border:1px solid #adadad"></div>
<div class="t" style="left:545.83px;top:348.0px;font-size:15px;letter-spacing:-0.504px;word-spacing:1px;color:#000;">Regular</div>
<svg class="a" style="left:865px;top:350px" width="9" height="5" viewBox="0 0 9 5"><path d="M.5 .3h8l-4 4.200z" fill="#000"/></svg>
<div class="a" style="left:568px;top:368px;width:208px;height:24px;background:#fff;border:1px solid #7a7a7a"></div>
<div class="t" style="left:570.19px;top:375.0px;font-size:15px;letter-spacing:-0.245px;word-spacing:1px;color:#000;">12,00 pt</div>
<div class="a" style="left:759px;top:370px;width:15px;height:10px;background:#e6e6e6;border:1px solid #adadad"></div><div class="a" style="left:759px;top:380px;width:15px;height:10px;background:#e6e6e6;border:1px solid #adadad"></div>
<svg class="a" style="left:763px;top:373px" width="7" height="14" viewBox="0 0 7 14"><path d="M.8 4.200L3.500 1.200L6.200 4.200zM.8 9.800l2.700 3l2.700-3z" fill="#000"/></svg>
<svg class="a" style="left:545px;top:370px" width="19" height="20" viewBox="0 0 19 20"><text x="1.800" y="17.600" font-family="Liberation Serif,serif" font-size="23.500" textLength="15.500" lengthAdjust="spacingAndGlyphs" fill="#000" stroke="#000" stroke-width=".55">T</text><text x="1.600" y="18" font-family="Liberation Serif,serif" font-size="12.500" fill="#f01010">T</text></svg>
<div class="a" style="left:568px;top:395px;width:208px;height:24px;background:#e1e1e1;border:1px solid #adadad"></div>
<div class="t" style="left:571.33px;top:402.0px;font-size:15px;letter-spacing:-0.417px;word-spacing:1px;color:#000;">Fester Zeilenabstand</div>
<svg class="a" style="left:762px;top:404px" width="9" height="5" viewBox="0 0 9 5"><path d="M.5 .3h8l-4 4.200z" fill="#000"/></svg>
<svg class="a" style="left:545px;top:394px" width="18" height="24" viewBox="0 0 18 24"><text x="5.300" y="10.800" font-family="Liberation Serif,serif" font-size="12" fill="#000">T</text><text x="5.300" y="21" font-family="Liberation Serif,serif" font-size="12" fill="#f01010">T</text><path d="M1 11.500h12" stroke="#555" stroke-width="1"/><path d="M2.500 12v9M1 13.500l1.500-1.500l1.500 1.500M1 19.500l1.500 1.500l1.500-1.500" stroke="#333" stroke-width="1" fill="none"/></svg>
<div class="a" style="left:779px;top:395px;width:97px;height:24px;background:#fff;border:1px solid #7a7a7a"></div>
<div class="t" style="left:781.19px;top:402.0px;font-size:15px;letter-spacing:-0.245px;word-spacing:1px;color:#000;">15,00 pt</div>
<div class="a" style="left:859px;top:397px;width:15px;height:10px;background:#e6e6e6;border:1px solid #adadad"></div><div class="a" style="left:859px;top:407px;width:15px;height:10px;background:#e6e6e6;border:1px solid #adadad"></div>
<svg class="a" style="left:863px;top:400px" width="7" height="14" viewBox="0 0 7 14"><path d="M.8 4.200L3.500 1.200L6.200 4.200zM.8 9.800l2.700 3l2.700-3z" fill="#000"/></svg>
<div class="a" style="left:544px;top:423px;width:20px;height:20px;background:linear-gradient(90deg,#cfe5f8,#e4eff9);border:1px solid #0a4f94;box-shadow:inset 1px 1px 0 #3b7fc2"></div>
<svg class="a" style="left:548px;top:426px" width="14" height="16" viewBox="0 0 14 16"><rect x=".5" y=".5" width="13" height="14.4" rx="1.600" fill="#fdfdfd" stroke="#8c897e"/><path d="M12.500 13.900h-9" stroke="#e4e4e4" stroke-width="1"/><rect x="3.5" y="3.0" width="7" height="1" fill="#7d7d7d"/><rect x="3.5" y="6.1" width="5" height="1" fill="#7d7d7d"/><rect x="3.5" y="9.2" width="7" height="1" fill="#7d7d7d"/><rect x="3.5" y="12.3" width="4" height="1" fill="#7d7d7d"/></svg>
<div class="a" style="left:566px;top:423px;width:20px;height:20px;background:#d9d9d9;border:1px solid #b4b4b4"></div>
<svg class="a" style="left:569px;top:425px" width="14" height="16" viewBox="0 0 14 16"><rect x=".5" y=".5" width="13" height="14.4" rx="1.600" fill="#fdfdfd" stroke="#8c897e"/><path d="M12.500 13.900h-9" stroke="#e4e4e4" stroke-width="1"/><rect x="3.5" y="3.0" width="7" height="1" fill="#7d7d7d"/><rect x="5.5" y="6.1" width="4" height="1" fill="#7d7d7d"/><rect x="3.5" y="9.2" width="7" height="1" fill="#7d7d7d"/><rect x="5.5" y="12.3" width="4" height="1" fill="#7d7d7d"/></svg>
<div class="a" style="left:588px;top:423px;width:20px;height:20px;background:#d9d9d9;border:1px solid #b4b4b4"></div>
<svg class="a" style="left:591px;top:425px" width="14" height="16" viewBox="0 0 14 16"><rect x=".5" y=".5" width="13" height="14.4" rx="1.600" fill="#fdfdfd" stroke="#8c897e"/><path d="M12.500 13.900h-9" stroke="#e4e4e4" stroke-width="1"/><rect x="3.5" y="3.0" width="7" height="1" fill="#7d7d7d"/><rect x="6.5" y="6.1" width="4" height="1" fill="#7d7d7d"/><rect x="3.5" y="9.2" width="7" height="1" fill="#7d7d7d"/><rect x="6.5" y="12.3" width="4" height="1" fill="#7d7d7d"/></svg>
<div class="a" style="left:610px;top:423px;width:20px;height:20px;background:#d9d9d9;border:1px solid #b4b4b4"></div>
<svg class="a" style="left:613px;top:425px" width="14" height="16" viewBox="0 0 14 16"><rect x=".5" y=".5" width="13" height="14.4" rx="1.600" fill="#fdfdfd" stroke="#8c897e"/><path d="M12.500 13.900h-9" stroke="#e4e4e4" stroke-width="1"/><rect x="3.5" y="3.0" width="7" height="1" fill="#7d7d7d"/><rect x="3.5" y="6.1" width="7" height="1" fill="#7d7d7d"/><rect x="3.5" y="9.2" width="7" height="1" fill="#7d7d7d"/><rect x="3.5" y="12.3" width="3" height="1" fill="#7d7d7d"/></svg>
<div class="a" style="left:632px;top:423px;width:20px;height:20px;background:#d9d9d9;border:1px solid #b4b4b4"></div>
<svg class="a" style="left:635px;top:425px" width="14" height="16" viewBox="0 0 14 16"><rect x=".5" y=".5" width="13" height="14.4" rx="1.600" fill="#fdfdfd" stroke="#8c897e"/><path d="M12.500 13.900h-9" stroke="#e4e4e4" stroke-width="1"/><rect x="3.5" y="3.0" width="7" height="1" fill="#7d7d7d"/><rect x="3.5" y="6.1" width="7" height="1" fill="#7d7d7d"/><rect x="3.5" y="9.2" width="7" height="1" fill="#7d7d7d"/><rect x="3.5" y="12.3" width="7" height="1" fill="#7d7d7d"/></svg>
<div class="a" style="left:540px;top:452px;width:342px;height:278px;border:1px solid #828282;border-right-color:#a0a0a0;border-bottom-color:#a0a0a0;background:#f0f0f0"></div>
<div class="a" style="left:542px;top:455px;width:321px;height:17px;background:#e1e1e1;border:1px solid #adadad"></div>
<svg class="a" style="left:546px;top:458.5px" width="10" height="10" viewBox="0 0 10 10"><path d="M0 .4v8.400L8.800 4.600z" fill="#000"/></svg>
<div class="t" style="left:632.33px;top:458.0px;font-size:15px;letter-spacing:-0.555px;word-spacing:1px;color:#000;">Position der ersten Zeile</div>
<div class="a" style="left:542px;top:475px;width:321px;height:17px;background:#e1e1e1;border:1px solid #adadad"></div>
<svg class="a" style="left:545.5px;top:478.5px" width="10" height="10" viewBox="0 0 10 10"><path d="M.3 0h9.400L5 9z" fill="#000"/></svg>
<div class="t" style="left:630.30px;top:478.0px;font-size:15px;letter-spacing:-0.248px;word-spacing:1px;color:#000;">Spalten &amp; Textabstände</div>
<div class="a" style="left:541px;top:492px;width:323px;height:193px;border:1px solid #000;border-top-width:2px;border-left-width:2px"></div>
<div class="t" style="left:546.60px;top:506.0px;font-size:15px;letter-spacing:-0.310px;word-spacing:0.0px;color:#000;">Spalten:</div>
<div class="a" style="left:704px;top:499px;width:154px;height:24px;background:#fff;border:1px solid #7a7a7a"></div>
<div class="t" style="left:706.59px;top:506.0px;font-size:15px;letter-spacing:-0.450px;word-spacing:1px;color:#000;">1</div>
<div class="a" style="left:841px;top:501px;width:15px;height:10px;background:#e6e6e6;border:1px solid #adadad"></div><div class="a" style="left:841px;top:511px;width:15px;height:10px;background:#e6e6e6;border:1px solid #adadad"></div>
<svg class="a" style="left:845px;top:504px" width="7" height="14" viewBox="0 0 7 14"><path d="M.8 4.200L3.500 1.200L6.200 4.200zM.8 9.800l2.700 3l2.700-3z" fill="#000"/></svg>
<div class="a" style="left:547px;top:525px;width:155px;height:24px;background:#ccc;border:1px solid #c4c4c4"></div>
<div class="t" style="left:551.50px;top:532.0px;font-size:15px;letter-spacing:-0.142px;word-spacing:0.0px;color:#929292;">Abstand:</div>
<svg class="a" style="left:688px;top:534px" width="9" height="6" viewBox="0 0 9 6"><path d="M0 0h9l-4.5 5z" fill="#a8a8a8"/><path d="M9 0l-4 5" stroke="#fff" stroke-width="1.2"/></svg>
<div class="a" style="left:704px;top:525px;width:154px;height:24px;background:#f0f0f0;border:1px solid #c9c9c9"></div>
<div class="t" style="left:706.90px;top:532.0px;font-size:15px;letter-spacing:-0.274px;word-spacing:1px;color:#929292;">0,00 pt</div>
<div class="a" style="left:841px;top:527px;width:15px;height:10px;background:#f0f0f0;border:1px solid #e3e3e3"></div><div class="a" style="left:841px;top:537px;width:15px;height:10px;background:#f0f0f0;border:1px solid #e3e3e3"></div>
<svg class="a" style="left:845px;top:530px" width="7" height="14" viewBox="0 0 7 14"><path d="M.8 4.200L3.500 1.200L6.200 4.200zM.8 9.800l2.700 3l2.700-3z" fill="#929292"/></svg>
<div class="t" style="left:546.60px;top:558.0px;font-size:15px;letter-spacing:0.316px;word-spacing:0.0px;color:#000;">Oben:</div>
<div class="a" style="left:704px;top:551px;width:154px;height:24px;background:#fff;border:1px solid #7a7a7a"></div>
<div class="t" style="left:706.90px;top:558.0px;font-size:15px;letter-spacing:-0.274px;word-spacing:1px;color:#000;">0,00 pt</div>
<div class="a" style="left:841px;top:553px;width:15px;height:10px;background:#e6e6e6;border:1px solid #adadad"></div><div class="a" style="left:841px;top:563px;width:15px;height:10px;background:#e6e6e6;border:1px solid #adadad"></div>
<svg class="a" style="left:845px;top:556px" width="7" height="14" viewBox="0 0 7 14"><path d="M.8 4.200L3.500 1.200L6.200 4.200zM.8 9.800l2.700 3l2.700-3z" fill="#000"/></svg>
<div class="t" style="left:546.13px;top:584.0px;font-size:15px;letter-spacing:0.236px;word-spacing:0.0px;color:#000;">Unten:</div>
<div class="a" style="left:704px;top:577px;width:154px;height:24px;background:#fff;border:1px solid #7a7a7a"></div>
<div class="t" style="left:706.90px;top:584.0px;font-size:15px;letter-spacing:-0.274px;word-spacing:1px;color:#000;">0,00 pt</div>
<div class="a" style="left:841px;top:579px;width:15px;height:10px;background:#e6e6e6;border:1px solid #adadad"></div><div class="a" style="left:841px;top:589px;width:15px;height:10px;background:#e6e6e6;border:1px solid #adadad"></div>
<svg class="a" style="left:845px;top:582px" width="7" height="14" viewBox="0 0 7 14"><path d="M.8 4.200L3.500 1.200L6.200 4.200zM.8 9.800l2.700 3l2.700-3z" fill="#000"/></svg>
<div class="t" style="left:546.13px;top:610.0px;font-size:15px;letter-spacing:-0.253px;word-spacing:0.0px;color:#000;">Links:</div>
<div class="a" style="left:704px;top:603px;width:154px;height:24px;background:#fff;border:1px solid #7a7a7a"></div>
<div class="t" style="left:706.90px;top:610.0px;font-size:15px;letter-spacing:-0.274px;word-spacing:1px;color:#000;">0,00 pt</div>
<div class="a" style="left:841px;top:605px;width:15px;height:10px;background:#e6e6e6;border:1px solid #adadad"></div><div class="a" style="left:841px;top:615px;width:15px;height:10px;background:#e6e6e6;border:1px solid #adadad"></div>
<svg class="a" style="left:845px;top:608px" width="7" height="14" viewBox="0 0 7 14"><path d="M.8 4.200L3.500 1.200L6.200 4.200zM.8 9.800l2.700 3l2.700-3z" fill="#000"/></svg>
<div class="t" style="left:546.13px;top:636.0px;font-size:15px;letter-spacing:0.182px;word-spacing:0.0px;color:#000;">Rechts:</div>
<div class="a" style="left:704px;top:629px;width:154px;height:24px;background:#fff;border:1px solid #7a7a7a"></div>
<div class="t" style="left:706.90px;top:636.0px;font-size:15px;letter-spacing:-0.274px;word-spacing:1px;color:#000;">0,00 pt</div>
<div class="a" style="left:841px;top:631px;width:15px;height:10px;background:#e6e6e6;border:1px solid #adadad"></div><div class="a" style="left:841px;top:641px;width:15px;height:10px;background:#e6e6e6;border:1px solid #adadad"></div>
<svg class="a" style="left:845px;top:634px" width="7" height="14" viewBox="0 0 7 14"><path d="M.8 4.200L3.500 1.200L6.200 4.200zM.8 9.800l2.700 3l2.700-3z" fill="#000"/></svg>
<div class="a" style="left:548px;top:656px;width:309px;height:22px;background:#e1e1e1;border:1px solid #adadad"></div>
<div class="t" style="left:658.20px;top:662.0px;font-size:15px;letter-spacing:-0.085px;word-spacing:0.0px;color:#000;">Tabulatoren...</div>
<div class="a" style="left:542px;top:687px;width:321px;height:17px;background:#e1e1e1;border:1px solid #adadad"></div>
<svg class="a" style="left:546px;top:690.5px" width="10" height="10" viewBox="0 0 10 10"><path d="M0 .4v8.400L8.800 4.600z" fill="#000"/></svg>
<div class="t" style="left:631.10px;top:690.0px;font-size:15px;letter-spacing:-0.481px;word-spacing:1px;color:#000;">Optischer Randausgleich</div>
<div class="a" style="left:542px;top:707px;width:321px;height:17px;background:#e1e1e1;border:1px solid #adadad"></div>
<svg class="a" style="left:546px;top:710.5px" width="10" height="10" viewBox="0 0 10 10"><path d="M0 .4v8.400L8.800 4.600z" fill="#000"/></svg>
<div class="t" style="left:633.43px;top:710.0px;font-size:15px;letter-spacing:-0.611px;word-spacing:1px;color:#000;">Erweiterte Einstellungen</div>
<div class="a" style="left:864px;top:453px;width:17px;height:276px;background:#f0f0f0"></div>
<div class="a" style="left:866px;top:540px;width:14px;height:171px;background:#cdcdcd"></div>
<svg class="a" style="left:868.500px;top:458.500px" width="10" height="7" viewBox="0 0 10 7"><path d="M1.300 5.800l3.700-3.700l3.700 3.700" stroke="#505050" stroke-width="1.800" fill="none"/></svg>
<svg class="a" style="left:868.500px;top:716px" width="10" height="7" viewBox="0 0 10 7"><path d="M1.300 1.200l3.700 3.700l3.700-3.700" stroke="#505050" stroke-width="1.800" fill="none"/></svg>
</body></html>
